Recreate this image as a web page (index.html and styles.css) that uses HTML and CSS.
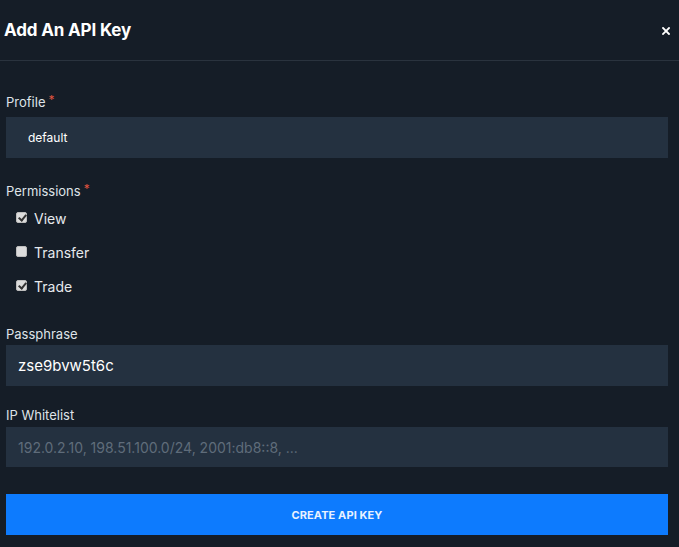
FILE: index.html
```html
<!DOCTYPE html>
<html lang="en">
<head>
<meta charset="utf-8">
<title>Add An API Key</title>
<link rel="stylesheet" href="styles.css">
</head>
<body>
<div class="modal">
  <header class="modal-header">
    <h1 class="modal-title">Add An API Key</h1>
    <button class="close-btn" aria-label="Close">
      <svg width="8" height="8" viewBox="0 0 8 8"><path d="M1 1L7 7M7 1L1 7" stroke="#ffffff" stroke-width="1.8" stroke-linecap="square"/></svg>
    </button>
  </header>
  <form class="modal-body">
    <label class="field-label label-profile">Profile<span class="req">*</span></label>
    <div class="input input-profile">default</div>

    <label class="field-label label-perm">Permissions<span class="req">*</span></label>
    <div class="checks">
      <label class="check-row"><span class="box checked"></span><span>View</span></label>
      <label class="check-row"><span class="box"></span><span>Transfer</span></label>
      <label class="check-row"><span class="box checked"></span><span>Trade</span></label>
    </div>

    <label class="field-label label-pass">Passphrase</label>
    <div class="input input-pass">zse9bvw5t6c</div>

    <label class="field-label label-ip">IP Whitelist</label>
    <div class="input input-ip placeholder">192.0.2.10, 198.51.100.0/24, 2001:db8::8, ...</div>

    <button type="button" class="submit-btn">CREATE API KEY</button>
  </form>
</div>
</body>
</html>
```

FILE: styles.css
```css
html, body {
  margin: 0;
  padding: 0;
  background: #151d27;
  height: 100%;
}
body {
  font-family: Inter, "Noto Sans", "Liberation Sans", sans-serif;
  color: #dfe3e8;
  overflow: hidden;
}
.modal {
  display: flex;
  flex-direction: column;
}
.modal-header {
  height: 60px;
  border-bottom: 1px solid #2a333e;
  display: flex;
  align-items: center;
  justify-content: space-between;
  padding: 0 9px 0 4px;
}
.modal-title {
  margin: 0;
  font-size: 17px;
  font-weight: 700;
  color: #ffffff;
  letter-spacing: -0.15px;
}
.close-btn {
  background: none;
  border: 0;
  padding: 0;
  width: 8px;
  height: 8px;
  display: flex;
  margin-top: 2px;
}
.modal-body {
  display: flex;
  flex-direction: column;
  padding: 0 11px 0 6px;
  margin: 0;
}
.field-label {
  display: block;
  font-size: 13px;
  line-height: 16px;
  height: 16px;
  color: #dfe3e8;
}
.req {
  color: #e0533f;
  margin-left: 3px;
  font-size: 12px;
  position: relative;
  top: -3px;
}
.label-profile { margin-top: 33px; }
.label-perm { margin-top: 25px; }
.label-pass { margin-top: 23px; }
.label-ip { margin-top: 21px; }
.input {
  height: 41px;
  background: #243140;
  display: flex;
  align-items: center;
  color: #ffffff;
  box-sizing: border-box;
}
.input-profile {
  margin-top: 7px;
  padding-left: 22px;
  font-size: 12px;
}
.input-pass {
  margin-top: 3px;
  padding-left: 12px;
  font-size: 15px;
}
.input-ip {
  margin-top: 4px;
  padding-left: 12px;
  font-size: 14px;
  height: 40px;
}
.placeholder {
  color: #5f6c7a;
}
.checks {
  margin-top: 2px;
  display: flex;
  flex-direction: column;
}
.check-row {
  height: 34px;
  display: flex;
  align-items: center;
  padding-left: 10px;
  font-size: 14px;
  color: #e6e9ed;
}
.box {
  width: 11px;
  height: 11px;
  border-radius: 2px;
  background: #dcdcdc;
  margin-right: 7px;
  box-sizing: border-box;
  border: 1px solid #bdbdbd;
  display: inline-block;
  position: relative;
  top: -1px;
}
.box.checked::after {
  content: "";
  position: absolute;
  left: 3px;
  top: 0px;
  width: 3px;
  height: 6px;
  border-right: 2px solid #333;
  border-bottom: 2px solid #333;
  transform: rotate(40deg);
}
.submit-btn {
  margin-top: 27px;
  height: 41px;
  border: 0;
  background: #0d7bfe;
  color: #e8f2ff;
  font-family: Inter, "Noto Sans", "Liberation Sans", sans-serif;
  font-size: 11px;
  font-weight: 700;
  letter-spacing: 0.1px;
  padding: 0;
}
```
